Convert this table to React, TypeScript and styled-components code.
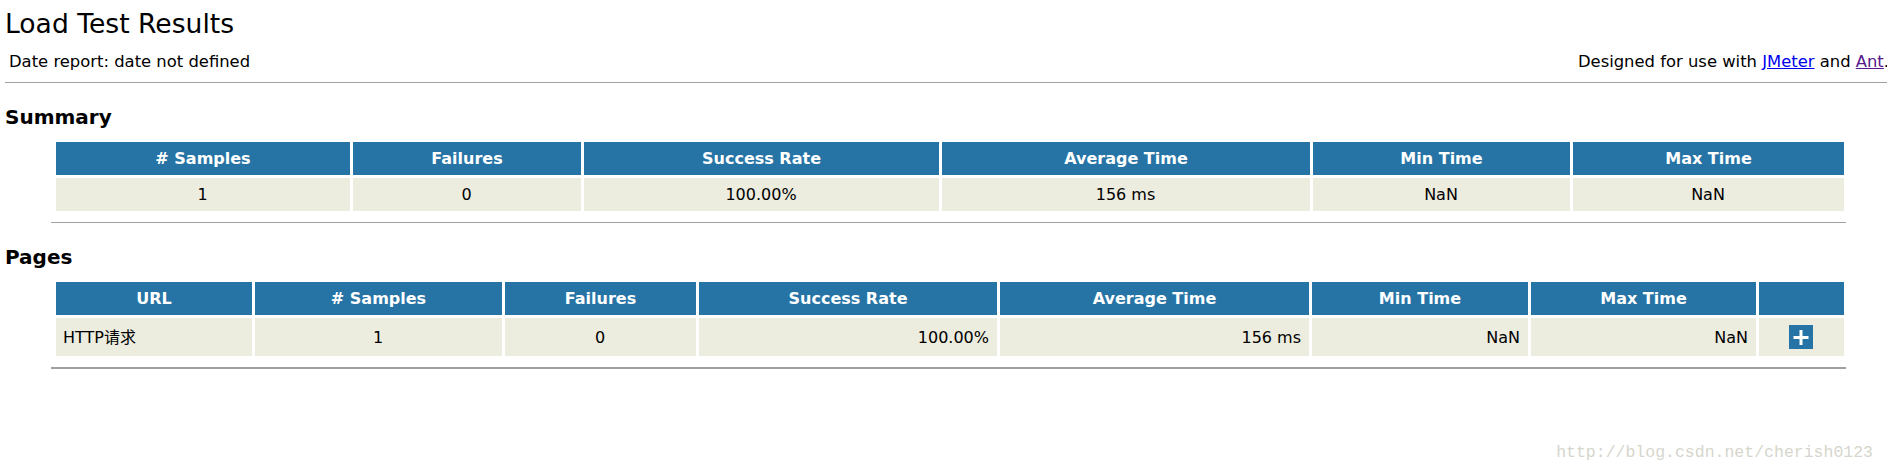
import React from "react";
import styled, { createGlobalStyle } from "styled-components";

const GlobalStyle = createGlobalStyle`
  *, *::before, *::after { box-sizing: border-box; }
  html, body {
    margin: 0;
    padding: 0;
    overflow: hidden;
    background: #ffffff;
    color: #000000;
    font-family: "DejaVu Sans", Verdana, "Noto Sans CJK SC", sans-serif;
  }
`;

const Page = styled.div`
  padding: 0 0 0 5px;
  width: 1895px;
`;

const Title = styled.h1`
  margin: 0;
  padding-top: 9px;
  font-size: 26.6px;
  line-height: 30px;
  font-weight: normal;
`;

const InfoRow = styled.div`
  margin-top: 13px;
  width: 1884px;
  padding-left: 4px;
  display: flex;
  justify-content: space-between;
  font-size: 16.4px;
  line-height: 19px;
`;

const Link = styled.a<{ $visited?: boolean }>`
  color: ${(p) => (p.$visited ? "#551a8b" : "#0000ee")};
  text-decoration: underline;
`;

const TopRule = styled.div`
  margin-top: 11px;
  width: 1890px;
  border-top: 1px solid #a0a0a0;
`;

const SectionTitle = styled.h2`
  margin: 22px 0 0;
  font-size: 20px;
  line-height: 24px;
  font-weight: bold;
`;

const Table = styled.table`
  margin: 10px 0 0 48px;
  width: 1794px;
  table-layout: fixed;
  border-collapse: separate;
  border-spacing: 3px;
  font-size: 16px;
  line-height: 19px;
`;

const HeadCell = styled.th<{ $w: number }>`
  width: ${(p) => p.$w}px;
  padding: 7px;
  background: #2674a6;
  color: #ffffff;
  font-weight: bold;
  text-align: center;
  white-space: nowrap;
`;

const Cell = styled.td<{ $align: "left" | "center" | "right" }>`
  padding: 7px 8px 7px 7px;
  background: #ececdf;
  text-align: ${(p) => p.$align};
  vertical-align: middle;
  white-space: nowrap;
`;

const TableRule = styled.div<{ $thick: number }>`
  margin: 8px 0 0 46px;
  width: 1795px;
  border-top: ${(p) => p.$thick}px solid #a0a0a0;
`;

const ExpandButton = styled.svg`
  display: block;
  margin: 0 auto;
  cursor: pointer;
`;

const Watermark = styled.div`
  position: absolute;
  top: 443px;
  right: 14px;
  font-family: "Liberation Mono", "DejaVu Sans Mono", monospace;
  font-size: 16.5px;
  line-height: 19px;
  color: #d6d6cc;
  pointer-events: none;
`;

type Align = "left" | "center" | "right";
type Col = { label: string; w: number; align: Align };

const summaryCols: Col[] = [
  { label: "# Samples", w: 294, align: "center" },
  { label: "Failures", w: 228, align: "center" },
  { label: "Success Rate", w: 355, align: "center" },
  { label: "Average Time", w: 368, align: "center" },
  { label: "Min Time", w: 257, align: "center" },
  { label: "Max Time", w: 271, align: "center" },
];
const summaryRow = ["1", "0", "100.00%", "156 ms", "NaN", "NaN"];

const pageCols: Col[] = [
  { label: "URL", w: 196, align: "left" },
  { label: "# Samples", w: 247, align: "center" },
  { label: "Failures", w: 191, align: "center" },
  { label: "Success Rate", w: 298, align: "right" },
  { label: "Average Time", w: 309, align: "right" },
  { label: "Min Time", w: 216, align: "right" },
  { label: "Max Time", w: 225, align: "right" },
  { label: "", w: 85, align: "center" },
];
const pageRow = ["HTTP请求", "1", "0", "100.00%", "156 ms", "NaN", "NaN"];

const PlusIcon = () => (
  <ExpandButton width="24" height="24" viewBox="0 0 24 24" aria-label="expand">
    <rect x="0" y="0" width="24" height="24" fill="#2674a6" />
    <path d="M4.5 12.5H19.5M12 5V20" stroke="#ffffff" strokeWidth="3" fill="none" />
  </ExpandButton>
);

export default function App() {
  return (
    <>
      <GlobalStyle />
      <Page>
        <Title>Load Test Results</Title>
        <InfoRow>
          <span>Date report: date not defined</span>
          <span>
            Designed for use with <Link href="#">JMeter</Link> and{" "}
            <Link href="#" $visited>Ant</Link>.
          </span>
        </InfoRow>
        <TopRule />

        <SectionTitle>Summary</SectionTitle>
        <Table>
          <thead>
            <tr>
              {summaryCols.map((c) => (
                <HeadCell key={c.label} $w={c.w}>{c.label}</HeadCell>
              ))}
            </tr>
          </thead>
          <tbody>
            <tr>
              {summaryRow.map((v, i) => (
                <Cell key={i} $align={summaryCols[i].align}>{v}</Cell>
              ))}
            </tr>
          </tbody>
        </Table>
        <TableRule $thick={1} />

        <SectionTitle>Pages</SectionTitle>
        <Table>
          <thead>
            <tr>
              {pageCols.map((c, i) => (
                <HeadCell key={i} $w={c.w}>{c.label}</HeadCell>
              ))}
            </tr>
          </thead>
          <tbody>
            <tr>
              {pageRow.map((v, i) => (
                <Cell key={i} $align={pageCols[i].align}>{v}</Cell>
              ))}
              <Cell $align="center">
                <PlusIcon />
              </Cell>
            </tr>
          </tbody>
        </Table>
        <TableRule $thick={2} />
      </Page>
      <Watermark>http://blog.csdn.net/cherish0123</Watermark>
    </>
  );
}
